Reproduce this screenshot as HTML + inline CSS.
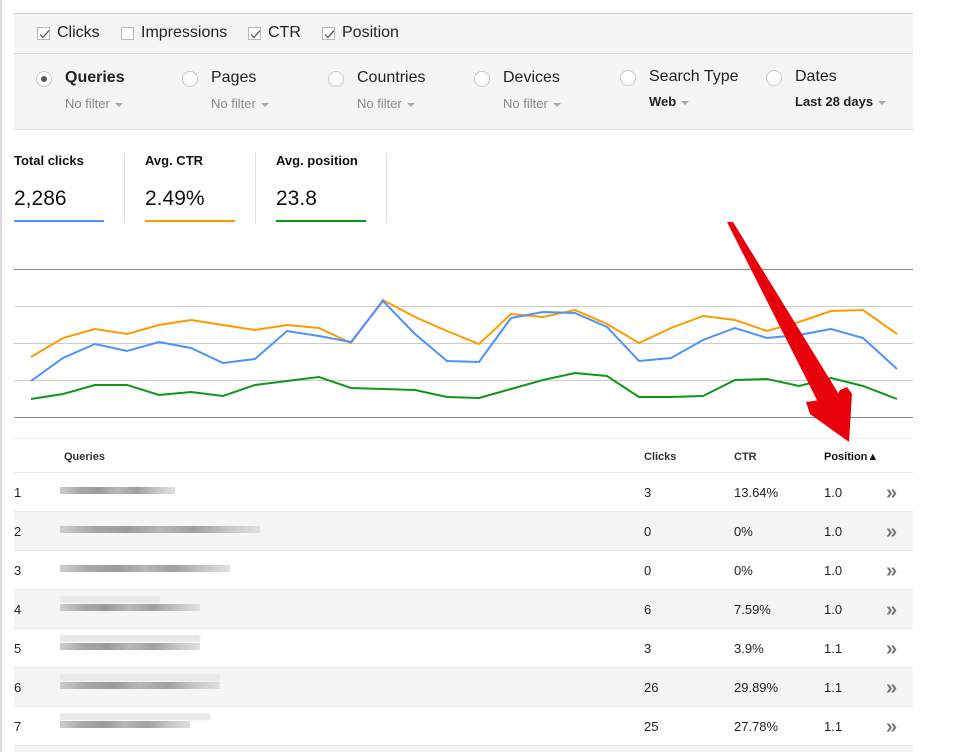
<!DOCTYPE html>
<html><head><style>
*{margin:0;padding:0;box-sizing:border-box}
html,body{width:953px;height:752px;overflow:hidden}
body{background:#fff;font-family:"Liberation Sans",Arial,sans-serif;position:relative;color:#222}
.a{position:absolute}
.cb{position:absolute;width:13px;height:13px;border:1px solid #b8b8b8;background:#fff;top:27px}
.cb svg{position:absolute;left:0;top:0}
.lbl{position:absolute;top:24px;font-size:16px;color:#222}
.rad{position:absolute;width:16px;height:16px;border-radius:50%;border:1px solid #c8c8c8;background:#fff}
.dim{position:absolute;font-size:16px;color:#222}
.sub{position:absolute;font-size:13px;color:#888}
.sub b{color:#222}
.car{display:inline-block;width:0;height:0;border-left:4px solid transparent;border-right:4px solid transparent;border-top:4px solid #aaa;vertical-align:middle;margin-left:5px}
.mt{position:absolute;top:153px;font-size:13px;font-weight:bold;color:#111}
.mv{position:absolute;top:187px;font-size:21px;color:#111}
.row{position:absolute;left:14px;width:899px;height:39px;border-top:1px solid #e8e8e8;font-size:13px}
.row span{position:absolute;top:12px}
.bar{position:absolute;left:46px;top:14px;height:7px;background:linear-gradient(90deg,#d0cccc,#a8a8aa,#9c9a9c,#b8b6b8,#a0a0a4,#c4c4c4,#e0e0e0);filter:blur(.3px)}
.bar2{position:absolute;left:46px;top:6px;height:7px;background:#e8e8e8;filter:blur(.5px)}
.chev{position:absolute;left:872px;top:9px;font-size:20px;color:#777;font-weight:bold}
</style></head><body>
<div class="a" style="left:0;top:0;width:2px;height:752px;background:#ddd"></div>
<div class="a" style="left:14px;top:13px;width:899px;height:117px;background:#f5f5f5;border-top:1px solid #ccc;border-bottom:1px solid #ddd"></div>
<div class="a" style="left:14px;top:53px;width:899px;height:1px;background:#d8d8d8"></div>
<div class="cb" style="left:37px"><svg width="13" height="13"><path d="M2 6.5 L5 9.5 L11 2.5" stroke="#666" stroke-width="1.4" fill="none"/></svg></div>
<div class="lbl" style="left:57px">Clicks</div>
<div class="cb" style="left:121px"></div>
<div class="lbl" style="left:141px">Impressions</div>
<div class="cb" style="left:248px"><svg width="13" height="13"><path d="M2 6.5 L5 9.5 L11 2.5" stroke="#666" stroke-width="1.4" fill="none"/></svg></div>
<div class="lbl" style="left:268px">CTR</div>
<div class="cb" style="left:322px"><svg width="13" height="13"><path d="M2 6.5 L5 9.5 L11 2.5" stroke="#666" stroke-width="1.4" fill="none"/></svg></div>
<div class="lbl" style="left:342px">Position</div>

<div class="rad" style="left:36px;top:71px"><div class="a" style="left:4px;top:4px;width:6px;height:6px;border-radius:50%;background:#555"></div></div>
<div class="dim" style="left:65px;top:69px;font-weight:bold">Queries</div>
<div class="sub" style="left:65px;top:96px">No filter<span class="car"></span></div>
<div class="rad" style="left:182px;top:71px"></div>
<div class="dim" style="left:211px;top:69px">Pages</div>
<div class="sub" style="left:211px;top:96px">No filter<span class="car"></span></div>
<div class="rad" style="left:328px;top:71px"></div>
<div class="dim" style="left:357px;top:69px">Countries</div>
<div class="sub" style="left:357px;top:96px">No filter<span class="car"></span></div>
<div class="rad" style="left:474px;top:71px"></div>
<div class="dim" style="left:503px;top:69px">Devices</div>
<div class="sub" style="left:503px;top:96px">No filter<span class="car"></span></div>
<div class="rad" style="left:620px;top:70px"></div>
<div class="dim" style="left:649px;top:68px">Search Type</div>
<div class="sub" style="left:649px;top:94px"><b>Web</b><span class="car"></span></div>
<div class="rad" style="left:766px;top:70px"></div>
<div class="dim" style="left:795px;top:68px">Dates</div>
<div class="sub" style="left:795px;top:94px"><b>Last 28 days</b><span class="car"></span></div>

<div class="mt" style="left:14px">Total clicks</div>
<div class="mv" style="left:14px">2,286</div>
<div class="a" style="left:14px;top:220px;width:90px;height:2px;background:#4d90fe"></div>
<div class="a" style="left:124px;top:153px;width:1px;height:70px;background:#ddd"></div>
<div class="mt" style="left:145px">Avg. CTR</div>
<div class="mv" style="left:145px">2.49%</div>
<div class="a" style="left:145px;top:220px;width:90px;height:2px;background:#ff9900"></div>
<div class="a" style="left:255px;top:153px;width:1px;height:70px;background:#ddd"></div>
<div class="mt" style="left:276px">Avg. position</div>
<div class="mv" style="left:276px">23.8</div>
<div class="a" style="left:276px;top:220px;width:90px;height:2px;background:#109618"></div>
<div class="a" style="left:386px;top:153px;width:1px;height:70px;background:#ddd"></div>

<svg class="a" style="left:0;top:0" width="953" height="752">
<line x1="14" y1="269.5" x2="913" y2="269.5" stroke="#888"/>
<line x1="14" y1="306.5" x2="913" y2="306.5" stroke="#ccc"/>
<line x1="14" y1="343.5" x2="913" y2="343.5" stroke="#ccc"/>
<line x1="14" y1="380.5" x2="913" y2="380.5" stroke="#ccc"/>
<line x1="14" y1="417.5" x2="913" y2="417.5" stroke="#888"/>
<polyline fill="none" stroke="#ff9900" stroke-width="2" points="31,357 63,338 95,329 127,334 159,325 191,320 223,325 255,330 287,325 319,328 351,343 383,300 415,317 447,331 479,344 511,314 543,317 575,310 607,324 639,343 671,328 703,316 735,320 767,331 799,322 831,311 863,310 897,334"/>
<polyline fill="none" stroke="#4d90fe" stroke-width="2" points="31,381 63,358 95,344 127,351 159,342 191,348 223,363 255,359 287,331 319,336 351,342 383,301 415,334 447,361 479,362 511,318 543,312 575,313 607,327 639,361 671,358 703,340 735,328 767,338 799,335 831,329 863,338 897,369"/>
<polyline fill="none" stroke="#109618" stroke-width="2" points="31,399 63,394 95,385 127,385 159,395 191,392 223,396 255,385 287,381 319,377 351,388 383,389 415,390 447,397 479,398 511,389 543,380 575,373 607,376 639,397 671,397 703,396 735,380 767,379 799,386 831,378 863,386 897,399"/>
</svg>

<div class="a" style="left:14px;top:438px;width:899px;height:1px;background:#eee"></div>
<div class="a" style="left:64px;top:451px;font-size:11px;font-weight:bold;color:#333">Queries</div>
<div class="a" style="left:644px;top:451px;font-size:11px;font-weight:bold;color:#333">Clicks</div>
<div class="a" style="left:734px;top:451px;font-size:11px;font-weight:bold;color:#333">CTR</div>
<div class="a" style="left:824px;top:451px;font-size:11px;font-weight:bold;color:#111">Position▲</div>

<div class="row" style="top:472px;background:#fff"><span style="left:0">1</span><div class="bar" style="width:115px"></div><span style="left:630px">3</span><span style="left:720px">13.64%</span><span style="left:810px">1.0</span><div class="chev">»</div></div>
<div class="row" style="top:511px;background:#f5f5f5"><span style="left:0">2</span><div class="bar" style="width:200px"></div><span style="left:630px">0</span><span style="left:720px">0%</span><span style="left:810px">1.0</span><div class="chev">»</div></div>
<div class="row" style="top:550px;background:#fff"><span style="left:0">3</span><div class="bar" style="width:170px"></div><span style="left:630px">0</span><span style="left:720px">0%</span><span style="left:810px">1.0</span><div class="chev">»</div></div>
<div class="row" style="top:589px;background:#f5f5f5"><span style="left:0">4</span><div class="bar" style="width:140px"></div><div class="bar2" style="width:100px"></div><span style="left:630px">6</span><span style="left:720px">7.59%</span><span style="left:810px">1.0</span><div class="chev">»</div></div>
<div class="row" style="top:628px;background:#fff"><span style="left:0">5</span><div class="bar" style="width:140px"></div><div class="bar2" style="width:140px"></div><span style="left:630px">3</span><span style="left:720px">3.9%</span><span style="left:810px">1.1</span><div class="chev">»</div></div>
<div class="row" style="top:667px;background:#f5f5f5"><span style="left:0">6</span><div class="bar" style="width:160px"></div><div class="bar2" style="width:160px"></div><span style="left:630px">26</span><span style="left:720px">29.89%</span><span style="left:810px">1.1</span><div class="chev">»</div></div>
<div class="row" style="top:706px;background:#fff"><span style="left:0">7</span><div class="bar" style="width:130px"></div><div class="bar2" style="width:150px"></div><span style="left:630px">25</span><span style="left:720px">27.78%</span><span style="left:810px">1.1</span><div class="chev">»</div></div>
<div class="row" style="top:745px;height:7px;background:#f5f5f5"></div>

<svg class="a" style="left:0;top:0" width="953" height="752">
<polygon fill="#e8000a" points="727,222 733,222 840,396 820,406"/>
<polygon fill="#e8000a" points="806,402 810,414 849,442 852,394 847,387 840,390 836,398"/>
</svg>
</body></html>
